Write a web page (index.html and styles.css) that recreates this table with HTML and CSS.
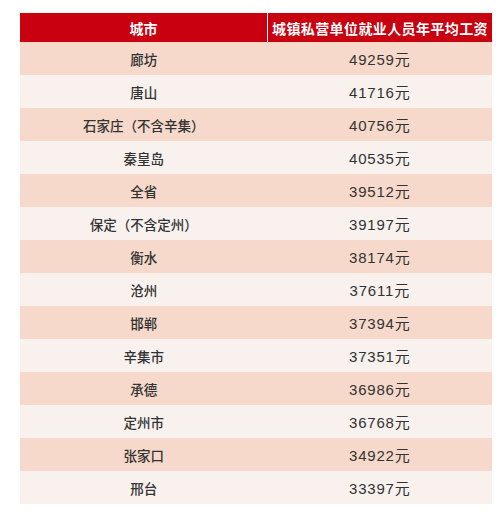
FILE: index.html
```html
<!DOCTYPE html>
<html lang="zh">
<head>
<meta charset="utf-8">
<link rel="stylesheet" href="styles.css">
</head>
<body>
<table class="wage">
  <thead>
    <tr><th class="c1">城市</th><th class="c2">城镇私营单位就业人员年平均工资</th></tr>
  </thead>
  <tbody>
    <tr><td>廊坊</td><td class="num">49259元</td></tr>
    <tr><td>唐山</td><td class="num">41716元</td></tr>
    <tr><td>石家庄（不含辛集）</td><td class="num">40756元</td></tr>
    <tr><td>秦皇岛</td><td class="num">40535元</td></tr>
    <tr><td>全省</td><td class="num">39512元</td></tr>
    <tr><td>保定（不含定州）</td><td class="num">39197元</td></tr>
    <tr><td>衡水</td><td class="num">38174元</td></tr>
    <tr><td>沧州</td><td class="num">37611元</td></tr>
    <tr><td>邯郸</td><td class="num">37394元</td></tr>
    <tr><td>辛集市</td><td class="num">37351元</td></tr>
    <tr><td>承德</td><td class="num">36986元</td></tr>
    <tr><td>定州市</td><td class="num">36768元</td></tr>
    <tr><td>张家口</td><td class="num">34922元</td></tr>
    <tr><td>邢台</td><td class="num">33397元</td></tr>
  </tbody>
</table>
</body>
</html>
```
FILE: styles.css
```css
html, body {
  margin: 0;
  background: #ffffff;
}
body {
  padding: 13px 12px 0 20px;
  font-family: "Liberation Sans", "Noto Sans CJK SC", sans-serif;
  color: #333333;
}
.wage {
  width: 472px;
  border-collapse: collapse;
  table-layout: fixed;
}
.wage th {
  height: 29px;
  padding: 0;
  background: #c8000f;
  color: #ffffff;
  font-weight: bold;
  font-size: 14px;
  text-align: center;
  vertical-align: middle;
}
.wage th.c1 {
  width: 247px;
}
.wage th.c2 {
  letter-spacing: 0.4px;
  border-left: 1px solid #ffffff;
  white-space: nowrap;
}
.wage td {
  height: 33px;
  padding: 0;
  text-align: center;
  vertical-align: middle;
  font-size: 13.5px;
  font-weight: 500;
}
.wage td.num {
  font-size: 15px;
  font-weight: normal;
  letter-spacing: 0.8px;
}
.wage tbody tr:nth-child(odd) {
  background: #f6d9ca;
}
.wage tbody tr:nth-child(even) {
  background: #f8f1ee;
}
```
